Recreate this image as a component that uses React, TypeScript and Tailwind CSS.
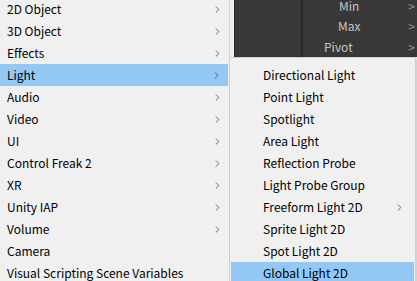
import { ChevronRight } from "lucide-react";

const mainItems = [
  { label: "2D Object", sub: true },
  { label: "3D Object", sub: true },
  { label: "Effects", sub: true },
  { label: "Light", sub: true, active: true },
  { label: "Audio", sub: true },
  { label: "Video", sub: true },
  { label: "UI", sub: true },
  { label: "Control Freak 2", sub: true },
  { label: "XR", sub: true },
  { label: "Unity IAP", sub: true },
  { label: "Volume", sub: true },
  { label: "Camera" },
  { label: "Visual Scripting Scene Variables" },
];

const lightItems = [
  { label: "Directional Light" },
  { label: "Point Light" },
  { label: "Spotlight" },
  { label: "Area Light" },
  { label: "Reflection Probe" },
  { label: "Light Probe Group" },
  { label: "Freeform Light 2D", sub: true },
  { label: "Sprite Light 2D" },
  { label: "Spot Light 2D" },
  { label: "Global Light 2D", active: true },
];

function Arrow() {
  return <ChevronRight size={11} strokeWidth={1.5} className="text-[#333]" />;
}

export default function App() {
  return (
    <div
      className="flex w-[417px] h-[281px] overflow-hidden bg-[#f0f0f0] text-[12px] text-black"
      style={{ fontFamily: '"Noto Sans CJK KR", "Noto Sans", sans-serif' }}
    >
      {/* main menu */}
      <div className="w-[230px] shrink-0 border-r border-[#d6d6d6]">
        <div className="-mt-[2px]">
          {mainItems.map((item) => (
            <div
              key={item.label}
              className={`flex items-center justify-between h-[22px] pl-[7px] pr-[6px] ${
                item.active ? "bg-[#93c8f5] mr-[1px]" : ""
              }`}
            >
              <span>{item.label}</span>
              {item.sub && <Arrow />}
            </div>
          ))}
        </div>
      </div>

      {/* right side */}
      <div className="flex-1 flex flex-col">
        {/* inspector behind */}
        <div className="h-[62px] ml-[4px] flex bg-[#383838] border-l border-[#2a2a2a] text-[#c4c4c4]">
          <div className="w-[68px] border-r-2 border-[#262626]" />
          <div className="flex-1 flex flex-col -mt-[4px]">
            <div className="flex items-center h-[20px]">
              <span className="ml-[36px]">Min</span>
              <span className="ml-auto mr-[2px] text-[#999]">&gt;</span>
            </div>
            <div className="flex items-center h-[20px]">
              <span className="ml-[35px]">Max</span>
              <span className="ml-auto mr-[2px] text-[#999]">&gt;</span>
            </div>
            <div className="flex items-center h-[21px]">
              <span className="ml-[21px]">Pivot</span>
              <span className="ml-auto mr-[2px] text-[#999]">&gt;</span>
            </div>
          </div>
        </div>

        {/* light submenu */}
        <div className="-ml-[1px] mr-[1px] flex-1 bg-[#f0f0f0] border border-[#cfcfcf] border-b-0 pt-[6px] px-[1px] shadow-[2px_2px_3px_rgba(0,0,0,0.15)]">
          {lightItems.map((item) => (
            <div
              key={item.label}
              className={`flex items-center justify-between h-[22px] pl-[32px] pr-[9px] ${
                item.active ? "bg-[#93c8f5]" : ""
              }`}
            >
              <span>{item.label}</span>
              {item.sub && <Arrow />}
            </div>
          ))}
        </div>
      </div>
    </div>
  );
}
